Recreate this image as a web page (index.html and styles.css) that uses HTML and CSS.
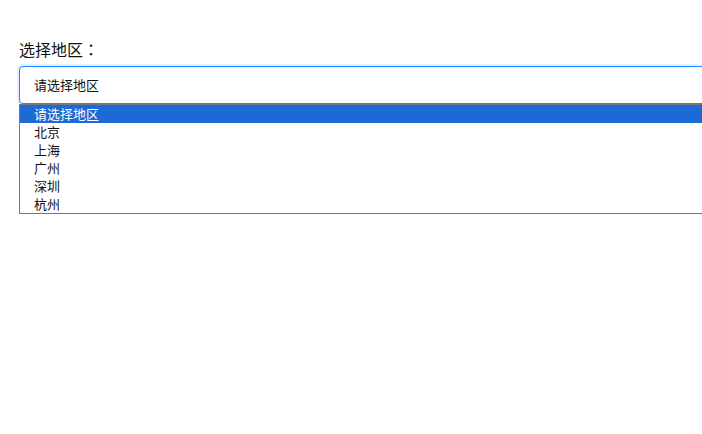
FILE: index.html
```html
<!DOCTYPE html>
<html lang="zh">
<head>
<meta charset="utf-8">
<title>选择地区</title>
<link rel="stylesheet" href="styles.css">
</head>
<body>
<div class="page">
  <label class="label">选择地区<span class="colon" lang="ja">：</span></label>
  <div class="select">
    <div class="select-box">请选择地区</div>
    <ul class="options">
      <li class="option selected">请选择地区</li>
      <li class="option">北京</li>
      <li class="option">上海</li>
      <li class="option">广州</li>
      <li class="option">深圳</li>
      <li class="option">杭州</li>
    </ul>
  </div>
</div>
</body>
</html>
```
FILE: styles.css
```css
html, body {
  margin: 0;
  padding: 0;
  overflow: hidden;
  background: #ffffff;
}
body {
  font-family: "Microsoft YaHei", "Noto Sans CJK SC", "Noto Sans", sans-serif;
  color: #111;
}
.page {
  padding: 37px 0 0 19px;
  width: 740px;
}
.label {
  display: block;
  font-size: 16px;
  line-height: 24px;
  margin-bottom: 5px;
}
.colon {
  font-family: "Noto Sans CJK JP", "Noto Sans CJK SC", sans-serif;
}
.select {
  width: 720px;
}
.select-box {
  box-sizing: border-box;
  height: 38px;
  border: 1px solid #1a87ff;
  border-radius: 4px;
  box-shadow: 0 0 0 2px rgba(26, 135, 255, 0.12);
  padding-left: 14px;
  font-size: 13px;
  line-height: 36px;
  color: #111;
  background: #fff;
}
.options {
  list-style: none;
  margin: 0;
  padding: 0;
  border: 1px solid #767676;
  background: #fff;
}
.option {
  height: 18px;
  line-height: 18px;
  font-size: 13px;
  padding-left: 14px;
  color: #111;
}
.option.selected {
  background: #1b6ad6;
  color: #fff;
}
```
